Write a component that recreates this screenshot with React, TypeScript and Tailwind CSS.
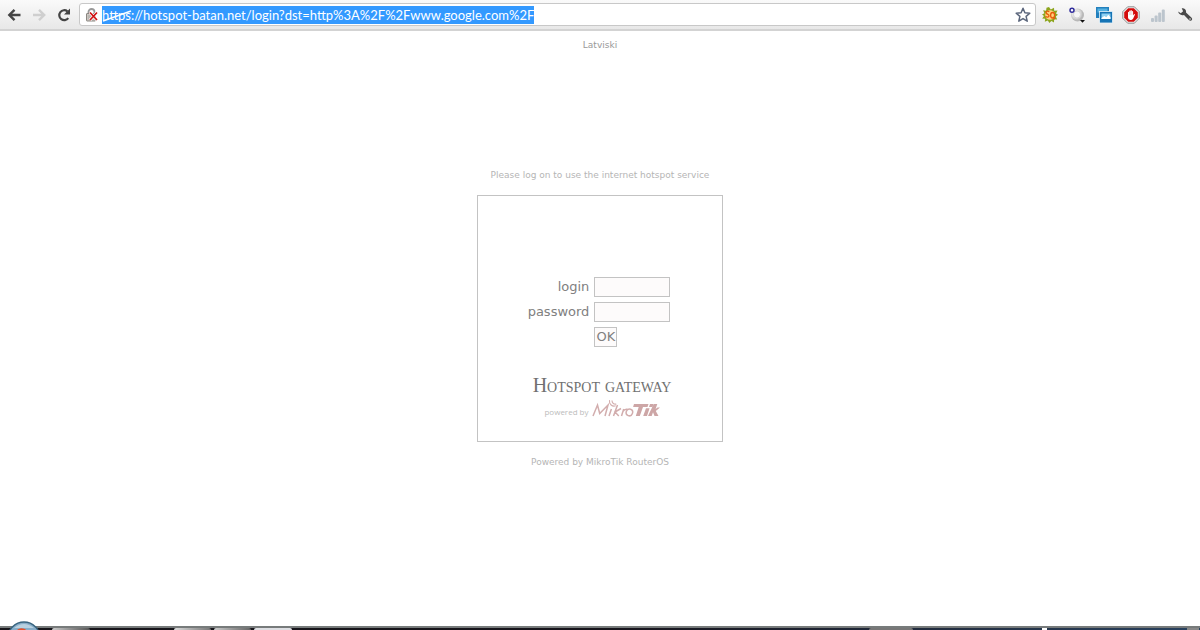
import React from 'react';

const TOOL_BUTTON = 'flex h-5 w-5 items-center justify-center';

const BackIcon = () => (
  <svg className="h-4 w-4" viewBox="0 0 16 16" fill="none" stroke="#444" strokeWidth="2.4">
    <path d="M14.5 8H4M8.5 2.8 3.3 8l5.2 5.2" />
  </svg>
);

const ForwardIcon = () => (
  <svg className="h-4 w-4" viewBox="0 0 16 16" fill="none" stroke="#cfcfcf" strokeWidth="2.4">
    <path d="M2 8h11M8 2.8 13.2 8 8 13.2" />
  </svg>
);

const ReloadIcon = () => (
  <svg className="h-4 w-4" viewBox="0 0 16 16">
    <path d="M12.3 11.2A5 5 0 1 1 11.4 4.3" fill="none" stroke="#444" strokeWidth="2.2" />
    <path d="M14 1.5V7.5H8z" fill="#444" />
  </svg>
);

const BrokenLockIcon = () => (
  <svg className="h-4 w-4 shrink-0" viewBox="0 0 16 16">
    <path d="M4.5 8V5a3 3 0 0 1 6 0v3" fill="none" stroke="#999" strokeWidth="1.8" />
    <rect x="2.5" y="6.5" width="9" height="7.5" rx="0.5" fill="#c9c5c0" stroke="#8b8782" />
    <path d="M4 9h6M4 11h6" stroke="#aaa6a0" />
    <path d="M6 5.5 13 13M13 5.5 6 13" stroke="#fff" strokeWidth="3" />
    <path d="M6 5.5 13 13M13 5.5 6 13" stroke="#cf1111" strokeWidth="1.7" />
  </svg>
);

const StarIcon = () => (
  <svg className="h-4 w-4" viewBox="0 0 16 16">
    <path
      d="M8 1.3 9.9 5.8l4.9.4-3.7 3.2 1.1 4.8L8 11.6l-4.2 2.6 1.1-4.8L1.2 6.2l4.9-.4z"
      fill="#fff"
      stroke="#5b667c"
      strokeWidth="1.5"
      strokeLinejoin="round"
    />
  </svg>
);

const GearIcon = () => (
  <svg className="h-4 w-4" viewBox="0 0 16 16">
    <path
      d="M7 0 8.8 2.6 12 .8l.2 3 3.3-.4-1.5 3 2 1.4-2.2 1.8 1.4 2.8-3.1-.2-.1 3.2-2.6-1.4L7.4 16l-1.6-2.6-3 1.4.4-3.1-3-.3 1.8-2.4L0 7.5l2.4-1.3-1.3-3 3 .6.4-3z"
      fill="#8da51e"
    />
    <circle cx="8" cy="8" r="4.8" fill="#ffd27c" />
    <path
      d="M7.3 4.6C5 3.3 3.4 5 4.4 6.3s2.8.8 2.6 2.5-2.4 1.5-3.6.6"
      fill="none"
      stroke="#e85b0c"
      strokeWidth="1.4"
    />
    <ellipse cx="10.6" cy="8.3" rx="2" ry="2.8" fill="none" stroke="#e85b0c" strokeWidth="1.3" />
    <path d="m10.6 10 2.4 2.2" stroke="#e85b0c" strokeWidth="1.3" />
  </svg>
);

const OrbIcon = () => (
  <svg className="h-4 w-4" viewBox="0 0 16 16">
    <defs>
      <radialGradient id="orb" cx="0.4" cy="0.4">
        <stop offset="0" stopColor="#fff" />
        <stop offset="0.6" stopColor="#e4e4e4" />
        <stop offset="1" stopColor="#b8b8b8" />
      </radialGradient>
    </defs>
    <circle cx="8.5" cy="8" r="6.5" fill="url(#orb)" />
    <circle cx="8" cy="7.5" r="3.6" fill="#f5f5f5" stroke="#d4d4d4" />
    <circle cx="3" cy="3.2" r="2" fill="#fff" stroke="#302c9c" strokeWidth="1.5" />
    <path d="M11 13h5l-2.5 2.8z" fill="#111" />
  </svg>
);

const PhotosIcon = () => (
  <svg className="h-[18px] w-[18px]" viewBox="0 0 18 18">
    <rect x="1" y="1" width="13" height="11" fill="#2380bd" />
    <rect x="2.5" y="2.5" width="10" height="4" fill="#56b2e2" />
    <rect x="4.5" y="5.5" width="13" height="11.5" fill="#1674b5" stroke="#e5f3fb" strokeWidth="0.8" />
    <rect x="6.5" y="7.5" width="9" height="5.5" fill="#8fd0f2" />
    <path d="M6.5 13v-1l2.8-2 2 1.2 2-2.4 2.2 2.4V13z" fill="#fff" />
  </svg>
);

const StopHandIcon = () => (
  <svg className="h-[18px] w-[18px]" viewBox="0 0 18 18">
    <path d="M5.6.8h6.8l4.8 4.8v6.8l-4.8 4.8H5.6L.8 12.4V5.6z" fill="#eee" stroke="#777" strokeWidth="0.8" />
    <path d="M6.2 2.2h5.6l4 4v5.6l-4 4H6.2l-4-4V6.2z" fill="#d40c0c" />
    <path
      d="M6 11.5V6.2q.7-.8 1.2 0V5q.7-.8 1.3 0v-.6q.7-.7 1.3 0v.8q.8-.6 1.3.2v4l.9-1.2q.9-.3 1 .4l-1.8 4q-.7 1.3-2 1.3H8.4Q6 13.7 6 11.5z"
      fill="#fff"
    />
    <path d="M7.3 6v3M8.6 5v4M9.9 5v4" stroke="#e69b9b" strokeWidth="0.4" />
  </svg>
);

const SignalIcon = () => (
  <svg className="h-4 w-4" viewBox="0 0 16 16" fill="#bcc5cd">
    <rect x="1" y="11" width="3" height="4" rx="1" />
    <rect x="4.6" y="8.5" width="3" height="6.5" rx="1" />
    <rect x="8.2" y="5.5" width="3" height="9.5" rx="1" />
    <rect x="11.8" y="2.5" width="3" height="12.5" rx="1" />
  </svg>
);

const WrenchIcon = () => (
  <svg className="h-4 w-4" viewBox="0 0 16 16">
    <path
      d="M4.7 1.3C7.4.7 9.5 2.8 9 5.5l5.6 5.2c1.6 1.8-.7 4.1-2.5 2.6L7 7.9C4.2 8.9 1.5 7.3 1.2 4.6l2.6 1.6 2.3-1.9z"
      fill="#4a4a4a"
    />
    <circle cx="13" cy="12" r="0.8" fill="#e5e5e5" />
  </svg>
);

const MikroTikLogo = () => (
  <svg className="h-5 w-[68px]" viewBox="0 0 68 20" role="img" aria-label="MikroTik">
    <g fill="none" stroke="#d2adad" strokeWidth="1.5">
      <path d="M1 16 5.5 5l2.2 8.5L16 5l-3 11" />
      <path d="m17 16 2.4-7M21.5 16l4-11M29 8.5 23 12l3.8 4M29.5 16l2.2-7M30.8 11.5q1.7-2.8 4.7-2.2" />
      <ellipse cx="37.4" cy="12.4" rx="3.2" ry="3.4" transform="rotate(20 37.4 12.4)" />
      <path d="M17.5.2q-.5 3 1.6 4.8t4.6.8M20 .5q0 2 1.3 3t3 .5" strokeWidth="1.1" />
    </g>
    <g fill="#cda6a6">
      <path d="M42 4h14.5l-1 3H51l-3.2 9h-4L46.7 7h-5.6z" />
      <path d="M54 8.2h3.6L55 16h-3.8zM58 4h3.5l-1 3H57z" />
      <path d="M61.7 4h3.6l-1.7 5 2-1.5H68L63.8 11l2.7 5h-4L61 12.2 59.7 16H56z" />
    </g>
  </svg>
);

const Toolbar = () => (
  <header className="flex h-[31px] shrink-0 items-center border-b-2 border-[#d3d3d3] bg-linear-to-b from-[#fafafa] to-[#e8e8e8] pl-1 pr-[5px]">
    <nav className="flex gap-[5px]">
      <button type="button" aria-label="Back" className={TOOL_BUTTON}><BackIcon /></button>
      <button type="button" aria-label="Forward" disabled className={TOOL_BUTTON}><ForwardIcon /></button>
      <button type="button" aria-label="Reload" className={TOOL_BUTTON}><ReloadIcon /></button>
    </nav>
    <div className="ml-[5px] flex h-[23px] flex-1 items-center rounded-[3px] border border-[#c8c8c8] bg-white pl-1 pr-1">
      <BrokenLockIcon />
      <div className="relative ml-[2px] flex">
        <input
          type="text"
          aria-label="Address"
          defaultValue="https://hotspot-batan.net/login?dst=http%3A%2F%2Fwww.google.com%2F"
          className="h-[18px] bg-[#3399ff] font-['Lato','Open_Sans',sans-serif] text-[13px] leading-[18px] text-white outline-none [field-sizing:content]"
        />
        <svg className="pointer-events-none absolute left-0 top-0 h-[18px] w-8" viewBox="0 0 32 18">
          <path d="M1 15 29 5" stroke="#fff" strokeWidth="1.5" />
        </svg>
      </div>
      <button type="button" aria-label="Bookmark this page" className="ml-auto"><StarIcon /></button>
    </div>
    <div className="ml-1 flex gap-[7px]">
      <button type="button" aria-label="SQ" className={TOOL_BUTTON}><GearIcon /></button>
      <button type="button" aria-label="Orb" className={TOOL_BUTTON}><OrbIcon /></button>
      <button type="button" aria-label="Photos" className={TOOL_BUTTON}><PhotosIcon /></button>
      <button type="button" aria-label="Blocker" className={TOOL_BUTTON}><StopHandIcon /></button>
      <button type="button" aria-label="Signal" className={TOOL_BUTTON}><SignalIcon /></button>
      <button type="button" aria-label="Settings" className={TOOL_BUTTON}><WrenchIcon /></button>
    </div>
  </header>
);

interface FieldProps {
  id: string;
  label: string;
  type: string;
}

const Field: React.FC<FieldProps> = ({ id, label, type }) => (
  <>
    <label htmlFor={id} className="text-right">{label}</label>
    <input
      id={id}
      name={id}
      type={type}
      className="h-5 w-[76px] border border-[#c3c3c3] bg-[#fdfbfb] px-1 outline-none"
    />
  </>
);

const LoginBox = () => (
  <section className="flex w-[246px] flex-col items-center border border-[#c3c3c3] pb-[19px] pt-[81px]">
    <form
      onSubmit={(e) => e.preventDefault()}
      className="grid grid-cols-[auto_auto] items-center gap-x-[5px] gap-y-[5px] pr-[2px] text-[13px] leading-5 text-[#808080]"
    >
      <Field id="username" label="login" type="text" />
      <Field id="password" label="password" type="password" />
      <button
        type="submit"
        className="col-start-2 h-5 w-[23px] justify-self-start border border-[#c3c3c3] bg-[#fdfbfb] text-center leading-[18px]"
      >
        OK
      </button>
    </form>
    <h1 className="mt-[28px] pl-1 font-['Liberation_Serif',serif] text-[20px] leading-5 text-[#707070] [font-variant:small-caps]">
      Hotspot gateway
    </h1>
    <div className="mt-[3px] flex items-center gap-[3px] pl-1 font-['Open_Sans',sans-serif] text-[8px] leading-5 text-[#bbb]">
      <span className="pt-1">powered by</span>
      <MikroTikLogo />
    </div>
  </section>
);

const Taskbar = () => (
  <footer className="relative h-1 shrink-0 border-t-2 border-[#777b7b] bg-linear-to-r from-[#17161b] via-[#16131a] to-[#29425f]">
    <div className="flex h-[2px] pl-[52px]">
      <span className="h-full w-[38px] rounded-t-sm bg-linear-to-r from-[#ccc] to-[#555]" />
      <span className="ml-[84px] h-full w-[37px] rounded-t-sm bg-linear-to-r from-[#ddd] to-[#777]" />
      <span className="ml-[3px] h-full w-[37px] rounded-t-sm bg-linear-to-r from-[#ccc] to-[#666]" />
      <span className="ml-[3px] h-full w-[38px] rounded-t-sm bg-[#dedfe3]" />
      <span className="ml-auto h-full w-[44px] rounded-t-sm bg-[#777]" />
      <span className="ml-[129px] h-full w-[5px] bg-white" />
      <span className="ml-[140px] mr-px h-full w-3 bg-[#888]" />
    </div>
    <svg className="absolute bottom-0 left-2 h-[9px] w-8" viewBox="0 0 32 9">
      <circle cx="16" cy="17" r="16" fill="#87adc8" stroke="#38647f" strokeWidth="1.5" />
      <path d="M6 7Q16-1 26 7z" fill="#b8d1e0" />
      <path d="M9 9q3-3 8-1l1 1z" fill="#e9512a" />
    </svg>
  </footer>
);

const App: React.FC = () => (
  <div className="flex min-h-screen flex-col bg-white font-['DejaVu_Sans',Verdana,sans-serif]">
    <Toolbar />
    <main className="flex flex-1 flex-col items-center pt-2 text-[9px] leading-3 text-[#b5b5b5]">
      <a href="#latviski" className="text-[#999]">Latviski</a>
      <div className="flex flex-1 flex-col items-center justify-center pb-10">
        <p className="mb-[14px]">Please log on to use the internet hotspot service</p>
        <LoginBox />
        <p className="mt-[14px]">Powered by MikroTik RouterOS</p>
      </div>
    </main>
    <Taskbar />
  </div>
);

export default App;
